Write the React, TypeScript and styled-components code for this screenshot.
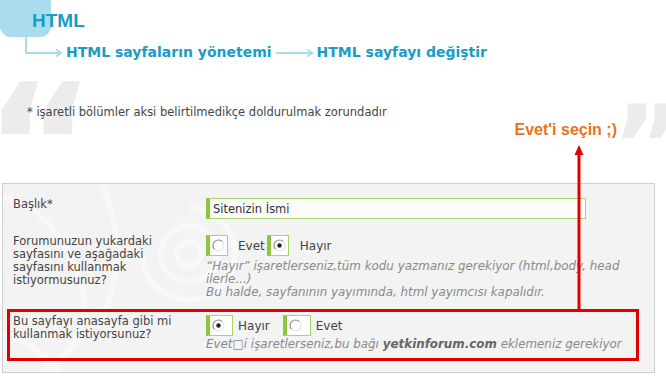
import styled, {createGlobalStyle} from "styled-components";

const GlobalStyle = createGlobalStyle`
  html, body {
    margin: 0;
    padding: 0;
    background: #fff;
  }
  body {
    font-family: "DejaVu Sans", Verdana, sans-serif;
    font-size: 11.5px;
    color: #444;
  }
`

type RadioProps = { checked?: boolean }

const RadioIcon = ({checked}: RadioProps) => (
    <svg width="13" height="13" viewBox="0 0 13 13">
        <circle cx="6.5" cy="6.5" r="5.5" fill="#fff"/>
        <path d="M2.6 10.4 A5.5 5.5 0 0 1 10.4 2.6" stroke="#8a8a8a" strokeWidth="1.2" fill="none"/>
        <path d="M10.4 2.6 A5.5 5.5 0 0 1 2.6 10.4" stroke="#e2e2e2" strokeWidth="1.2" fill="none"/>
        {checked && <circle cx="6.5" cy="6.5" r="2.2" fill="#222"/>}
    </svg>
)

type OptionProps = {
    label: string
    checked?: boolean
    boxWidth: number
    gap: number
    after: number
}

const Option = ({label, checked, boxWidth, gap, after}: OptionProps) => (
    <StyledOption $after={after}>
        <StyledRadioBox $width={boxWidth}>
            <RadioIcon checked={checked}/>
        </StyledRadioBox>
        <StyledOptionLabel $gap={gap}>{label}</StyledOptionLabel>
    </StyledOption>
)

export default function App() {
    return (
        <StyledPage>
            <GlobalStyle/>
            <StyledHeader>
                <StyledTab/>
                <StyledTitle>HTML</StyledTitle>
            </StyledHeader>
            <StyledCrumbs>
                <svg width="38" height="21" viewBox="0 0 38 21">
                    <path d="M1 0 V16 H36" stroke="#a9dbeb" strokeWidth="2" fill="none"/>
                    <path d="M31 12.5 L36.5 16 L31 19.5" stroke="#a9dbeb" strokeWidth="1.6" fill="none"/>
                </svg>
                <StyledCrumb>HTML sayfaların yönetemi</StyledCrumb>
                <StyledCrumbArrow width="38" height="10" viewBox="0 0 38 10">
                    <path d="M0 5 H36" stroke="#a9dbeb" strokeWidth="2" fill="none"/>
                    <path d="M31 1.5 L36.5 5 L31 8.5" stroke="#a9dbeb" strokeWidth="1.6" fill="none"/>
                </StyledCrumbArrow>
                <StyledCrumb>HTML sayfayı değiştir</StyledCrumb>
            </StyledCrumbs>

            <StyledNoteArea>
                <StyledQuote $side="left">“</StyledQuote>
                <StyledQuote $side="right">”</StyledQuote>
                <StyledNote>* işaretli bölümler aksi belirtilmedikçe doldurulmak zorundadır</StyledNote>
                <StyledHintRow>
                    <StyledHint>Evet'i seçin ;)</StyledHint>
                </StyledHintRow>
            </StyledNoteArea>

            <StyledPanel>
                <StyledSwirl width="653" height="190" viewBox="0 0 653 190">
                    <g stroke="#f8f8f8" fill="none" strokeWidth="6">
                        <circle cx="186" cy="70" r="12"/>
                        <circle cx="186" cy="70" r="28"/>
                        <path d="M186 24 A46 46 0 1 1 140 70"/>
                        <path d="M-10 10 C40 20 70 60 80 110 C90 150 60 180 20 200"/>
                        <path d="M95 -5 C120 40 120 90 100 130"/>
                        <path d="M0 150 C30 160 50 175 60 195"/>
                    </g>
                </StyledSwirl>

                <StyledRow $gapAfter={16}>
                    <StyledLabel>Başlık*</StyledLabel>
                    <StyledInput readOnly defaultValue="Sitenizin İsmi"/>
                </StyledRow>

                <StyledRow $gapAfter={10}>
                    <StyledLabel>
                        Forumunuzun yukardaki<br/>
                        sayfasını ve aşağadaki<br/>
                        sayfasını kullanmak<br/>
                        istiyormusunuz?
                    </StyledLabel>
                    <div>
                        <StyledOptions>
                            <Option label="Evet" boxWidth={22} gap={10} after={2}/>
                            <Option label="Hayır" checked boxWidth={22} gap={11} after={0}/>
                        </StyledOptions>
                        <StyledHelp $top={4}>
                            “Hayır” işaretlerseniz,tüm kodu yazmanız gerekiyor (html,body, head<br/>
                            ilerle...)<br/>
                            Bu halde, sayfanının yayımında, html yayımcısı kapalıdır.
                        </StyledHelp>
                    </div>
                </StyledRow>

                <StyledHighlightRow>
                    <StyledLabel>
                        Bu sayfayı anasayfa gibi mi<br/>
                        kullanmak istiyorsunuz?
                    </StyledLabel>
                    <div>
                        <StyledOptions>
                            <Option label="Hayır" checked boxWidth={27} gap={5} after={13}/>
                            <Option label="Evet" boxWidth={28} gap={5} after={0}/>
                        </StyledOptions>
                        <StyledHelp $top={2}>
                            Evet□i işaretlerseniz,bu bağı <b>yetkinforum.com</b> eklemeniz gerekiyor
                        </StyledHelp>
                    </div>
                </StyledHighlightRow>
            </StyledPanel>

            <StyledRedArrow width="10" height="165" viewBox="0 0 10 165">
                <path d="M5 0 L9.5 10 L0.5 10 Z" fill="#e00000"/>
                <rect x="3.5" y="9" width="3" height="156" fill="#e00000"/>
            </StyledRedArrow>
        </StyledPage>
    )
}

const StyledPage = styled.div`
  position: relative;
  width: 666px;
  height: 382px;
  overflow: hidden;
`

const StyledHeader = styled.div`
  position: relative;
  height: 37px;
  padding-left: 32px;
  box-sizing: border-box;
`

const StyledTab = styled.span`
  position: absolute;
  left: 0;
  top: -12px;
  width: 51px;
  height: 49px;
  border-radius: 11px;
  background: #aadced;
`

const StyledTitle = styled.h1`
  position: relative;
  margin: 0;
  padding-top: 4px;
  font-family: "Liberation Sans", Arial, sans-serif;
  font-size: 19px;
  line-height: 33px;
  font-weight: bold;
  color: #1b9cc4;
`

const StyledCrumbs = styled.div`
  display: flex;
  align-items: flex-start;
  height: 20px;
  padding-left: 25px;
`

const StyledCrumb = styled.span`
  margin: 6px 0 0 3px;
  font-family: "DejaVu Sans", Verdana, sans-serif;
  font-size: 14px;
  line-height: 18px;
  font-weight: bold;
  color: #1b9cc4;
  white-space: nowrap;
`

const StyledCrumbArrow = styled.svg`
  margin: 11px 0 0 4px;
`

const StyledNoteArea = styled.div`
  position: relative;
  height: 126px;
`

const StyledQuote = styled.span<{ $side: "left" | "right" }>`
  position: absolute;
  font-family: "DejaVu Sans", sans-serif;
  font-weight: bold;
  color: #ececec;
  line-height: 1;
  ${({$side}) => $side === "left"
          ? "left: -16px; top: 4px; font-size: 170px;"
          : "left: 612px; top: 34px; font-size: 110px;"}
`

const StyledNote = styled.p`
  position: relative;
  margin: 0;
  padding: 49px 0 0 27px;
  line-height: 13px;
  color: #444;
`

const StyledHintRow = styled.div`
  position: relative;
  display: flex;
  justify-content: flex-end;
  padding-right: 49px;
  margin-top: 2px;
`

const StyledHint = styled.span`
  font-family: "Liberation Sans", Arial, sans-serif;
  font-size: 16px;
  line-height: 17px;
  font-weight: bold;
  color: #e8731a;
`

const StyledPanel = styled.div`
  position: relative;
  margin-left: 2px;
  width: 653px;
  height: 190px;
  box-sizing: border-box;
  padding-top: 14px;
  border: 1px solid #cfcfcf;
  background: #f3f3f3;
  overflow: hidden;
`

const StyledSwirl = styled.svg`
  position: absolute;
  left: 0;
  top: 0;
`

const StyledRow = styled.div<{ $gapAfter: number }>`
  position: relative;
  display: grid;
  grid-template-columns: 193px 1fr;
  padding-left: 10px;
  margin-bottom: ${({$gapAfter}) => $gapAfter}px;
`

const StyledHighlightRow = styled.div`
  position: relative;
  display: grid;
  grid-template-columns: 193px 1fr;
  margin: 0 15px 0 4px;
  padding: 3px 0 7px 3px;
  border: 3px solid #e00000;
`

const StyledLabel = styled.div`
  line-height: 13px;
  color: #444;
`

const StyledInput = styled.input`
  width: 380px;
  height: 21px;
  box-sizing: border-box;
  margin: 0;
  padding: 0 0 0 3px;
  border: 1px solid #a6d56a;
  border-left: 4px solid #8cc63f;
  background: #fcfcfc;
  font-family: "DejaVu Sans", Verdana, sans-serif;
  font-size: 11.5px;
  color: #333;
  outline: none;
`

const StyledOptions = styled.div`
  display: flex;
  align-items: center;
  height: 21px;
`

const StyledOption = styled.label<{ $after: number }>`
  display: flex;
  align-items: center;
  margin-right: ${({$after}) => $after}px;
`

const StyledRadioBox = styled.span<{ $width: number }>`
  display: flex;
  align-items: center;
  width: ${({$width}) => $width}px;
  height: 21px;
  box-sizing: border-box;
  padding-left: 2px;
  border: 1px solid #a6d56a;
  border-left: 4px solid #8cc63f;
  background: #fff;
`

const StyledOptionLabel = styled.span<{ $gap: number }>`
  margin-left: ${({$gap}) => $gap}px;
  font-size: 12px;
  color: #444;
`

const StyledHelp = styled.div<{ $top: number }>`
  margin-top: ${({$top}) => $top}px;
  font-size: 11.9px;
  line-height: 13px;
  font-style: italic;
  color: #8a8a8a;
  white-space: nowrap;

  b {
    color: #666;
  }
`

const StyledRedArrow = styled.svg`
  position: absolute;
  left: 574px;
  top: 145px;
`
